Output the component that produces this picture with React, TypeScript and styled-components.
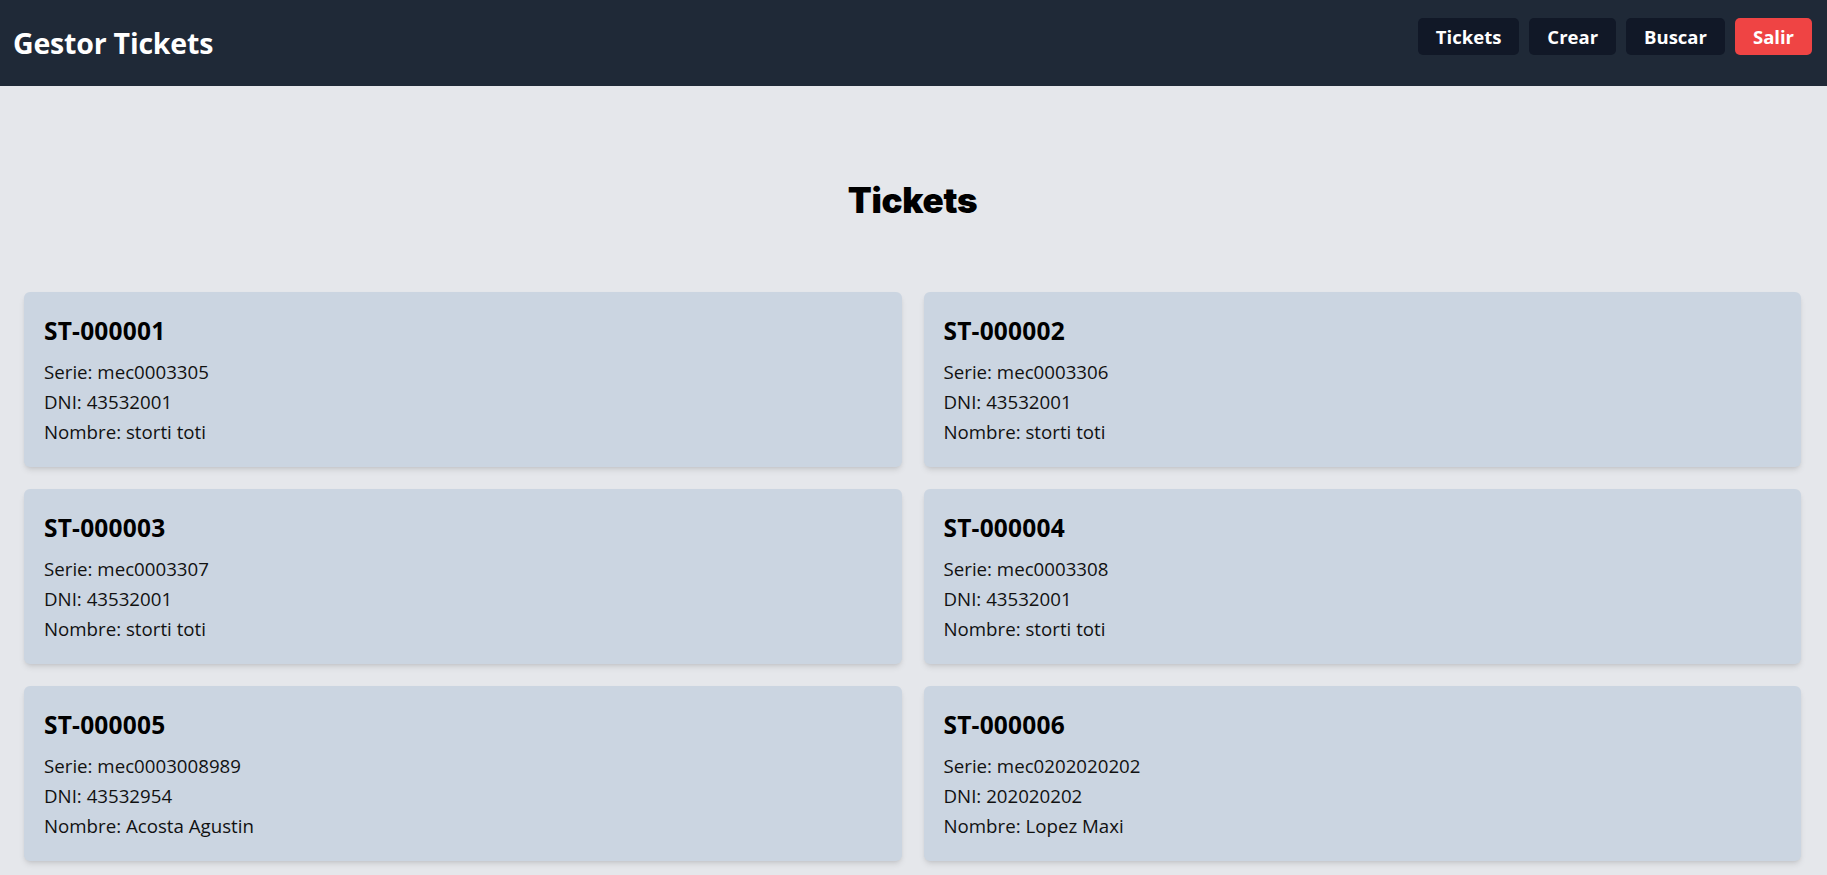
import React from "react";
import styled, { createGlobalStyle } from "styled-components";

const GlobalStyle = createGlobalStyle`
  html, body { margin: 0; padding: 0; }
  body {
    background: #e5e7eb;
    font-family: "Open Sans", "Noto Sans", "Liberation Sans", sans-serif;
    color: #000;
  }
  * { box-sizing: border-box; }
`;

const Nav = styled.nav`
  height: 86px;
  background: #1f2937;
  display: flex;
  align-items: center;
  justify-content: space-between;
  padding: 0 15px 0 13px;
`;

const Brand = styled.div`
  color: #fff;
  font-size: 28.5px;
  font-weight: 700;
  letter-spacing: -0.2px;
`;

const NavButtons = styled.div`
  display: flex;
  gap: 10px;
  margin-top: -14px;
`;

const NavButton = styled.button<{ $danger?: boolean }>`
  height: 37px;
  padding: 0 18px;
  border: none;
  border-radius: 5px;
  background: ${(p) => (p.$danger ? "#ef4444" : "#111827")};
  color: #fff;
  font-family: inherit;
  font-size: 18.5px;
  font-weight: 700;
  cursor: pointer;
`;

const Main = styled.main`
  padding: 0 26px 20px 24px;
`;

const Heading = styled.h1`
  margin: 0;
  padding: 92px 0 69px;
  text-align: center;
  font-family: Inter, "Open Sans", sans-serif;
  font-size: 35px;
  line-height: 45px;
  font-weight: 900;
  letter-spacing: -0.3px;
`;

const Grid = styled.div`
  display: grid;
  grid-template-columns: 1fr 1fr;
  gap: 22px;
`;

const Card = styled.div`
  background: #cbd5e1;
  border-radius: 6px;
  padding: 21px 20px 20px;
  height: 175px;
  box-shadow: 0 4px 6px -1px rgba(0, 0, 0, 0.1), 0 2px 4px -2px rgba(0, 0, 0, 0.1);
`;

const CardTitle = styled.h2`
  margin: 0 0 9px;
  font-size: 24.5px;
  line-height: 35px;
  font-weight: 700;
  letter-spacing: 0.2px;
`;

const Line = styled.p`
  margin: 0;
  font-size: 18.7px;
  line-height: 30px;
  color: #111;
`;

const tickets = [
  { id: "ST-000001", serie: "mec0003305", dni: "43532001", nombre: "storti toti" },
  { id: "ST-000002", serie: "mec0003306", dni: "43532001", nombre: "storti toti" },
  { id: "ST-000003", serie: "mec0003307", dni: "43532001", nombre: "storti toti" },
  { id: "ST-000004", serie: "mec0003308", dni: "43532001", nombre: "storti toti" },
  { id: "ST-000005", serie: "mec0003008989", dni: "43532954", nombre: "Acosta Agustin" },
  { id: "ST-000006", serie: "mec0202020202", dni: "202020202", nombre: "Lopez Maxi" },
];

export default function App() {
  return (
    <>
      <GlobalStyle />
      <Nav>
        <Brand>Gestor Tickets</Brand>
        <NavButtons>
          <NavButton>Tickets</NavButton>
          <NavButton>Crear</NavButton>
          <NavButton>Buscar</NavButton>
          <NavButton $danger>Salir</NavButton>
        </NavButtons>
      </Nav>
      <Main>
        <Heading>Tickets</Heading>
        <Grid>
          {tickets.map((t) => (
            <Card key={t.id}>
              <CardTitle>{t.id}</CardTitle>
              <Line>Serie: {t.serie}</Line>
              <Line>DNI: {t.dni}</Line>
              <Line>Nombre: {t.nombre}</Line>
            </Card>
          ))}
        </Grid>
      </Main>
    </>
  );
}
